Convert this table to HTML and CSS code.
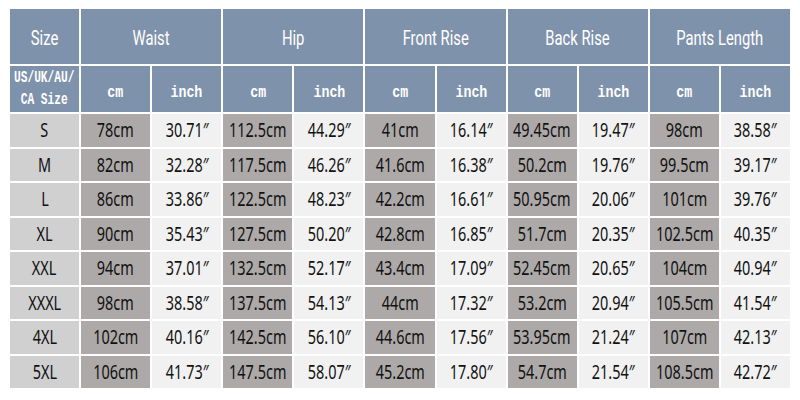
FILE: index.html
```html
<!DOCTYPE html>
<html>
<head>
<meta charset="utf-8">
<link rel="stylesheet" href="styles.css">
</head>
<body>
<div class="chart">
  <div class="h1 span1"><span>Size</span></div>
  <div class="h1 span2"><span>Waist</span></div>
  <div class="h1 span2"><span>Hip</span></div>
  <div class="h1 span2"><span>Front Rise</span></div>
  <div class="h1 span2"><span>Back Rise</span></div>
  <div class="h1 span2"><span>Pants Length</span></div>

  <div class="h2 region"><span>US/UK/AU/<br>CA Size</span></div>
  <div class="h2"><span>cm</span></div><div class="h2"><span>inch</span></div>
  <div class="h2"><span>cm</span></div><div class="h2"><span>inch</span></div>
  <div class="h2"><span>cm</span></div><div class="h2"><span>inch</span></div>
  <div class="h2"><span>cm</span></div><div class="h2"><span>inch</span></div>
  <div class="h2"><span>cm</span></div><div class="h2"><span>inch</span></div>

  <div class="c sz"><span>S</span></div>
  <div class="c cm"><span>78cm</span></div><div class="c in"><span>30.71″</span></div>
  <div class="c cm"><span>112.5cm</span></div><div class="c in"><span>44.29″</span></div>
  <div class="c cm"><span>41cm</span></div><div class="c in"><span>16.14″</span></div>
  <div class="c cm"><span>49.45cm</span></div><div class="c in"><span>19.47″</span></div>
  <div class="c cm"><span>98cm</span></div><div class="c in"><span>38.58″</span></div>

  <div class="c sz"><span>M</span></div>
  <div class="c cm"><span>82cm</span></div><div class="c in"><span>32.28″</span></div>
  <div class="c cm"><span>117.5cm</span></div><div class="c in"><span>46.26″</span></div>
  <div class="c cm"><span>41.6cm</span></div><div class="c in"><span>16.38″</span></div>
  <div class="c cm"><span>50.2cm</span></div><div class="c in"><span>19.76″</span></div>
  <div class="c cm"><span>99.5cm</span></div><div class="c in"><span>39.17″</span></div>

  <div class="c sz"><span>L</span></div>
  <div class="c cm"><span>86cm</span></div><div class="c in"><span>33.86″</span></div>
  <div class="c cm"><span>122.5cm</span></div><div class="c in"><span>48.23″</span></div>
  <div class="c cm"><span>42.2cm</span></div><div class="c in"><span>16.61″</span></div>
  <div class="c cm"><span>50.95cm</span></div><div class="c in"><span>20.06″</span></div>
  <div class="c cm"><span>101cm</span></div><div class="c in"><span>39.76″</span></div>

  <div class="c sz"><span>XL</span></div>
  <div class="c cm"><span>90cm</span></div><div class="c in"><span>35.43″</span></div>
  <div class="c cm"><span>127.5cm</span></div><div class="c in"><span>50.20″</span></div>
  <div class="c cm"><span>42.8cm</span></div><div class="c in"><span>16.85″</span></div>
  <div class="c cm"><span>51.7cm</span></div><div class="c in"><span>20.35″</span></div>
  <div class="c cm"><span>102.5cm</span></div><div class="c in"><span>40.35″</span></div>

  <div class="c sz"><span>XXL</span></div>
  <div class="c cm"><span>94cm</span></div><div class="c in"><span>37.01″</span></div>
  <div class="c cm"><span>132.5cm</span></div><div class="c in"><span>52.17″</span></div>
  <div class="c cm"><span>43.4cm</span></div><div class="c in"><span>17.09″</span></div>
  <div class="c cm"><span>52.45cm</span></div><div class="c in"><span>20.65″</span></div>
  <div class="c cm"><span>104cm</span></div><div class="c in"><span>40.94″</span></div>

  <div class="c sz"><span>XXXL</span></div>
  <div class="c cm"><span>98cm</span></div><div class="c in"><span>38.58″</span></div>
  <div class="c cm"><span>137.5cm</span></div><div class="c in"><span>54.13″</span></div>
  <div class="c cm"><span>44cm</span></div><div class="c in"><span>17.32″</span></div>
  <div class="c cm"><span>53.2cm</span></div><div class="c in"><span>20.94″</span></div>
  <div class="c cm"><span>105.5cm</span></div><div class="c in"><span>41.54″</span></div>

  <div class="c sz"><span>4XL</span></div>
  <div class="c cm"><span>102cm</span></div><div class="c in"><span>40.16″</span></div>
  <div class="c cm"><span>142.5cm</span></div><div class="c in"><span>56.10″</span></div>
  <div class="c cm"><span>44.6cm</span></div><div class="c in"><span>17.56″</span></div>
  <div class="c cm"><span>53.95cm</span></div><div class="c in"><span>21.24″</span></div>
  <div class="c cm"><span>107cm</span></div><div class="c in"><span>42.13″</span></div>

  <div class="c sz"><span>5XL</span></div>
  <div class="c cm"><span>106cm</span></div><div class="c in"><span>41.73″</span></div>
  <div class="c cm"><span>147.5cm</span></div><div class="c in"><span>58.07″</span></div>
  <div class="c cm"><span>45.2cm</span></div><div class="c in"><span>17.80″</span></div>
  <div class="c cm"><span>54.7cm</span></div><div class="c in"><span>21.54″</span></div>
  <div class="c cm"><span>108.5cm</span></div><div class="c in"><span>42.72″</span></div>
</div>
</body>
</html>
```

FILE: styles.css
```css
html, body {
  margin: 0;
  padding: 0;
  background: #ffffff;
}
body {
  width: 800px;
  height: 400px;
  overflow: hidden;
}
.chart {
  margin: 9px 0 0 10px;
  width: 780px;
  display: grid;
  grid-template-columns: repeat(11, 1fr);
  grid-template-rows: 55px 46px repeat(8, 32.5px);
  column-gap: 2px;
  row-gap: 2px;
}
.chart > div {
  display: flex;
  align-items: center;
  justify-content: center;
  overflow: hidden;
  white-space: nowrap;
}
.chart > div > span {
  display: inline-block;
}
.span1 { grid-column: span 1; }
.span2 { grid-column: span 2; }
.h1 {
  background: #7f92ab;
  color: #ffffff;
  font-family: Roboto, "Liberation Sans", sans-serif;
  font-size: 20px;
}
.h1 > span {
  transform: scaleX(0.74);
  margin-top: 2px;
}
.h2 {
  background: #7f92ab;
  color: #ffffff;
  font-family: "Liberation Mono", monospace;
  font-weight: bold;
  font-size: 17px;
}
.h2 > span {
  transform: scaleX(0.78);
  margin-top: 6px;
}
.h2.region {
  font-size: 16px;
  line-height: 22px;
}
.h2.region > span {
  text-align: center;
  transform: scaleX(0.7);
  margin-top: 0;
}
.c {
  color: #111111;
  font-family: "Noto Sans", "Open Sans", sans-serif;
  font-size: 19px;
}
.c > span {
  transform: scaleX(0.76);
}
.sz { background: #d0d0d0; }
.cm { background: #ada9a8; }
.in { background: #f1f1f1; }
```
